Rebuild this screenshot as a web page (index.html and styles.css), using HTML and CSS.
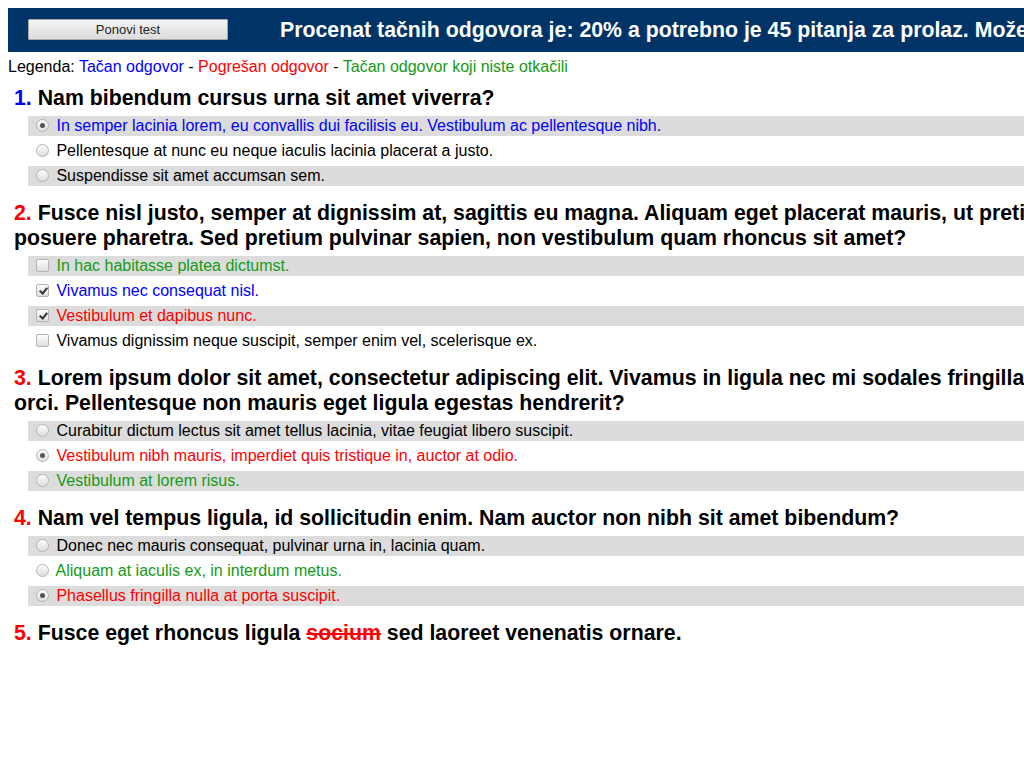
FILE: index.html
```html
<!DOCTYPE html>
<html lang="sr">
<head>
<meta charset="utf-8">
<title>Rezultati testa</title>
<link rel="stylesheet" href="styles.css">
</head>
<body>
<div class="page">
  <header class="topbar">
    <button class="retry" type="button">Ponovi test</button>
    <div class="score">Procenat tačnih odgovora je: 20% a potrebno je 45 pitanja za prolaz. Možete pokušati ponovo.</div>
  </header>

  <div class="legend">Legenda: <span class="c-correct">Tačan odgovor</span> - <span class="c-wrong">Pogrešan odgovor</span> - <span class="c-missed">Tačan odgovor koji niste otkačili</span></div>

  <section class="question">
    <h2 class="q-title"><span class="num c-correct">1.</span> Nam bibendum cursus urna sit amet viverra?</h2>
    <div class="opt shade c-correct"><input type="radio" class="radio" checked disabled> In semper lacinia lorem, eu convallis dui facilisis eu. Vestibulum ac pellentesque nibh.</div>
    <div class="opt"><input type="radio" class="radio" disabled> Pellentesque at nunc eu neque iaculis lacinia placerat a justo.</div>
    <div class="opt shade"><input type="radio" class="radio" disabled> Suspendisse sit amet accumsan sem.</div>
  </section>

  <section class="question">
    <h2 class="q-title"><span class="num c-wrong">2.</span> Fusce nisl justo, semper at dignissim at, sagittis eu magna. Aliquam eget placerat mauris, ut pretium posuere pharetra. Sed pretium pulvinar sapien, non vestibulum quam rhoncus sit amet?</h2>
    <div class="opt shade c-missed"><input type="checkbox" class="check" disabled> In hac habitasse platea dictumst.</div>
    <div class="opt c-correct"><input type="checkbox" class="check" checked disabled> Vivamus nec consequat nisl.</div>
    <div class="opt shade c-wrong"><input type="checkbox" class="check" checked disabled> Vestibulum et dapibus nunc.</div>
    <div class="opt"><input type="checkbox" class="check" disabled> Vivamus dignissim neque suscipit, semper enim vel, scelerisque ex.</div>
  </section>

  <section class="question">
    <h2 class="q-title"><span class="num c-wrong">3.</span> Lorem ipsum dolor sit amet, consectetur adipiscing elit. Vivamus in ligula nec mi sodales fringilla orci. Pellentesque non mauris eget ligula egestas hendrerit?</h2>
    <div class="opt shade"><input type="radio" class="radio" disabled> Curabitur dictum lectus sit amet tellus lacinia, vitae feugiat libero suscipit.</div>
    <div class="opt c-wrong"><input type="radio" class="radio" checked disabled> Vestibulum nibh mauris, imperdiet quis tristique in, auctor at odio.</div>
    <div class="opt shade c-missed"><input type="radio" class="radio" disabled> Vestibulum at lorem risus.</div>
  </section>

  <section class="question">
    <h2 class="q-title"><span class="num c-wrong">4.</span> Nam vel tempus ligula, id sollicitudin enim. Nam auctor non nibh sit amet bibendum?</h2>
    <div class="opt shade"><input type="radio" class="radio" disabled> Donec nec mauris consequat, pulvinar urna in, lacinia quam.</div>
    <div class="opt c-missed"><input type="radio" class="radio" disabled> Aliquam at iaculis ex, in interdum metus.</div>
    <div class="opt shade c-wrong"><input type="radio" class="radio" checked disabled> Phasellus fringilla nulla at porta suscipit.</div>
  </section>

  <section class="question">
    <h2 class="q-title"><span class="num c-wrong">5.</span> Fusce eget rhoncus ligula <s class="strike">socium</s> sed laoreet venenatis ornare.</h2>
  </section>
</div>
</body>
</html>
```

FILE: styles.css
```css
body {
  margin: 8px 0 8px 8px;
  font-family: "Liberation Sans", Arial, sans-serif;
  color: #000;
  background: #fff;
}

.page {
  width: 1066px;
}

.topbar {
  display: flex;
  align-items: center;
  height: 44px;
  padding: 0 20px;
  background: #003366;
  white-space: nowrap;
  overflow: hidden;
}

.retry {
  flex: 0 0 auto;
  width: 200px;
  height: 21px;
  margin: 0 52px 1px 0;
  padding: 0;
  font-family: "Liberation Sans", Arial, sans-serif;
  font-size: 13px;
  color: #222;
  background: linear-gradient(#f4f4f4, #dcdcdc);
  border: 1px solid #a9a9a9;
  border-radius: 1px;
}

.score {
  color: #fff;
  font-size: 21.3px;
  font-weight: bold;
  line-height: 24px;
  margin-bottom: 1px;
}

.legend {
  font-size: 16px;
  line-height: 20px;
  padding-top: 5px;
  margin-bottom: 9px;
}

.c-correct { color: #0000ff; }
.c-wrong { color: #ff0000; }
.c-missed { color: #159a15; }

.question {
  padding-bottom: 10px;
}

.q-title {
  margin: 0 0 5px;
  padding: 0 6px;
  font-size: 21.3px;
  font-weight: bold;
  line-height: 25px;
}

.strike {
  color: #ff0000;
  text-decoration: line-through;
}

.opt {
  height: 20px;
  line-height: 20px;
  margin-bottom: 5px;
  margin-left: 20px;
  padding-left: 3px;
  font-size: 16px;
  white-space: nowrap;
}

.shade {
  background: #dcdcdc;
}

.radio,
.check {
  -webkit-appearance: none;
  appearance: none;
  position: relative;
  width: 13px;
  height: 13px;
  margin: 0 3px 0 5px;
  vertical-align: -1px;
  border: 1px solid #b4b4b4;
  background: linear-gradient(#fdfdfd, #dedede);
  box-sizing: border-box;
}

.radio {
  border-radius: 50%;
}

.check {
  border-radius: 2px;
}

.radio:checked::after {
  content: "";
  position: absolute;
  left: 3px;
  top: 3px;
  width: 5px;
  height: 5px;
  border-radius: 50%;
  background: #555;
}

.check:checked::after {
  content: "";
  position: absolute;
  left: 3.5px;
  top: 1px;
  width: 3px;
  height: 6px;
  border: solid #333;
  border-width: 0 2px 2px 0;
  transform: rotate(40deg);
}
```
